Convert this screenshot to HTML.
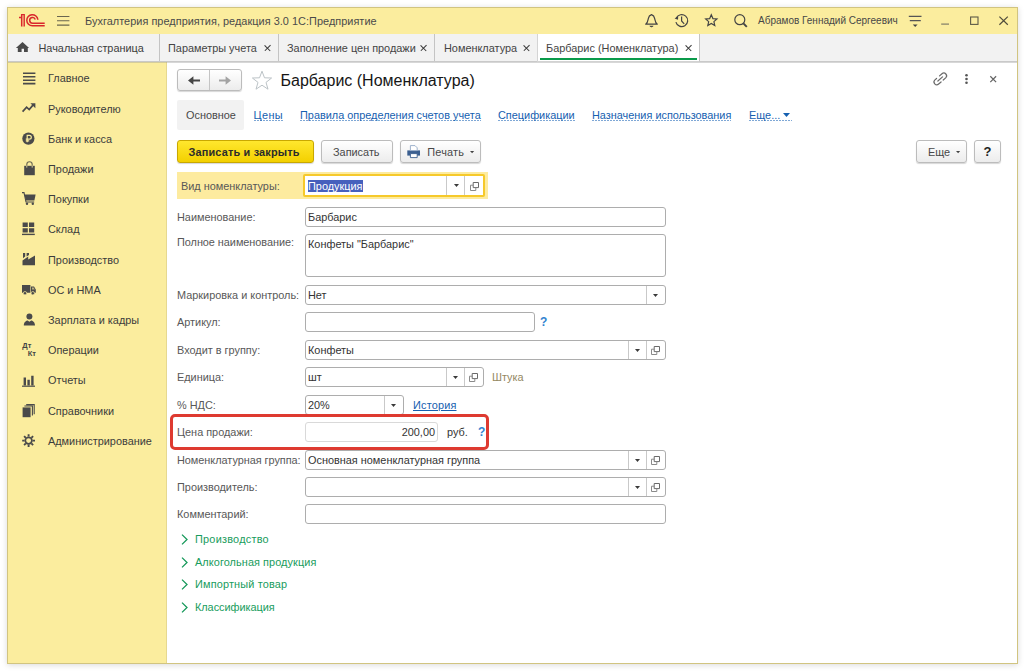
<!DOCTYPE html>
<html lang="ru"><head><meta charset="utf-8"><title>Барбарис (Номенклатура)</title>
<style>
*{box-sizing:border-box;margin:0;padding:0}
html,body{width:1024px;height:671px;overflow:hidden;background:#fff}
body{font-family:"Liberation Sans",sans-serif;font-size:10.9px;color:#444;position:relative}
body *{position:absolute}
.t{white-space:nowrap;line-height:14px;height:14px}
.win{left:7px;top:7px;width:1011px;height:657px;border:1px solid #d1c480;background:#fff;
 box-shadow:0 1px 6px 0 rgba(0,0,10,.15)}
.title{left:8px;top:8px;width:1009px;height:26px;background:#fbed9e}
.tabs{left:8px;top:34px;width:1009px;height:28px;background:#f2f2f2;border-bottom:1px solid #c9c9c9}
.tabs2{left:8px;top:62px;width:1009px;height:1px;background:rgba(150,150,150,.38)}
.side{left:8px;top:62px;width:159px;height:601px;background:#fbed9e;border-right:1px solid #e6d88f}
.vsep{top:34px;width:1px;height:27px;background:#c4c4c4}
.tabact{left:537px;top:34px;width:162px;height:28px;background:#fff;border-bottom:1px solid #d2d2d2;border-left:1px solid #d4d4d4}
.tabact:after{content:"";position:absolute;left:1.5px;top:24.4px;width:157px;height:1.8px;background:#0a9a4a}
svg{overflow:visible}
.x{width:6px;height:6px}
.x:before,.x:after{content:"";position:absolute;left:2.3px;top:-1.2px;width:1.35px;height:8.4px;background:#333;transform:rotate(45deg)}
.x:after{transform:rotate(-45deg)}
.lnk{color:#1560b0;height:13px;background:repeating-linear-gradient(90deg,#7fa8d6 0 2px,transparent 2px 3px) left bottom/100% 1px no-repeat}
.inp{border:1px solid #adadad;border-radius:3px;background:#fff;height:21px}
.btn{border:1px solid #bcbcbc;border-radius:3px;background:linear-gradient(#fff,#ececec);height:23px;box-shadow:0 1px 1px rgba(0,0,0,.16)}
.lbl{color:#585858}
.isep{width:1px;background:#c9c9c9}
.grp{color:#189c5c}
</style></head><body>
<div class="win"></div><div class="title"></div><div class="tabs"></div><div class="side"></div><div class="tabs2"></div>
<svg style="left:0;top:0" width="50" height="30" viewBox="0 0 50 30" fill="none" stroke="#d9262c" stroke-width="1.5">
 <rect x="22.2" y="15.2" width="1.4" height="11.4" fill="#f0a878" stroke="none"/>
 <path d="M19 17.5H21.6M21.6 26.6V14.65H24.25V26.6" stroke-width="1.3"/>
 <path d="M37.87 19.72 A5.55 5.55 0 1 0 32.35 25.85 H44.7"/><path d="M35.26 19.47 A2.85 2.85 0 1 0 32.55 23.20 H44.7"/>
</svg>
<svg style="left:56.5px;top:15px" width="13" height="11" viewBox="0 0 13 11" stroke="#6a664f" stroke-width="1.15"><path d="M0 1.5H12.4M0 5.7H12.4M0 10.1H12.4"/></svg>
<span class="t" style="left:85px;top:14px;letter-spacing:0.04px;color:#4a4a4a">Бухгалтерия предприятия, редакция 3.0 1С:Предприятие</span>
<svg style="left:645px;top:14px" width="13" height="14" viewBox="0 0 13 14" fill="none" stroke="#444" stroke-width="1.2" stroke-linejoin="round"><path d="M0.7 10.2 C2.7 8.6 2.9 6.8 3.3 4.6 C3.7 2.4 5 1.1 6.5 0.6 C8 1.1 9.3 2.4 9.7 4.6 C10.1 6.8 10.3 8.6 12.3 10.2 Z"/><path d="M4.8 12.1 H8.2 Q6.5 13.8 4.8 12.1Z" fill="#444" stroke-width=".6"/></svg>
<svg style="left:0;top:0" width="800" height="40" viewBox="0 0 800 40" fill="none" stroke="#444" stroke-width="1.2"><path d="M676.26 18.06 A6.0 6.0 0 1 1 675.90 22.15"/><path d="M681.6 16.6V21L684.2 23.8"/><path d="M674.6 18.4L678.2 16.2L678 19.8Z" fill="#444" stroke="none"/></svg>
<svg style="left:704.5px;top:14.2px" width="12.6" height="12.6" viewBox="0 0 14 14" fill="none" stroke="#444" stroke-width="1.3" stroke-linejoin="miter"><path d="M7 0.9 L8.8 5.1 L13.3 5.5 L9.9 8.5 L10.9 12.9 L7 10.6 L3.1 12.9 L4.1 8.5 L0.7 5.5 L5.2 5.1 Z"/></svg>
<svg style="left:733.5px;top:14px" width="14" height="14" viewBox="0 0 14 14" fill="none" stroke="#444" stroke-width="1.2"><circle cx="5.8" cy="5.7" r="5"/><path d="M9.4 9.3 L12.8 12.9" stroke-width="1.9"/></svg>
<span class="t" style="left:758px;top:14px;font-size:10px;color:#474747">Абрамов Геннадий Сергеевич</span>
<svg style="left:908px;top:15px" width="14" height="13" viewBox="0 0 14 13" stroke="#555" stroke-width="1.1"><path d="M0.8 1.4H13.5M1.8 5.6H12.8"/><path d="M4.8 9.6H9.6L7.2 12Z" fill="#444" stroke="none"/></svg>
<svg style="left:941px;top:15px" width="9" height="11" viewBox="0 0 9 11" stroke="#807c66" stroke-width="1.2"><path d="M0.2 9.1H8"/></svg>
<svg style="left:970px;top:16px" width="9" height="9" viewBox="0 0 9 9" fill="none" stroke="#5d5a48" stroke-width="1.1"><rect x="0.6" y="1" width="7.4" height="7.4"/></svg>
<svg style="left:999px;top:16px" width="9" height="9" viewBox="0 0 9 9" fill="none" stroke="#4f4c3c" stroke-width="1.2"><path d="M0.4 0.6L8.8 8.8M8.8 0.6L0.4 8.8"/></svg>
<svg style="left:16px;top:41.5px" width="13" height="10" viewBox="0 0 13 10" fill="#494949"><path d="M6.5 0 L13.1 6.1 H11.8 V10.1 H8 V6.7 H5.6 V10.1 H1.8 V6.1 H-0.1 Z"/></svg>
<span class="t" style="left:38.5px;top:41px;color:#3d3d3d">Начальная страница</span>
<div class="vsep" style="left:159px"></div>
<span class="t" style="left:168px;top:41px;">Параметры учета</span>
<span class="x" style="left:264.5px;top:45.3px"></span><div class="vsep" style="left:278px"></div>
<span class="t" style="left:287px;top:41px;">Заполнение цен продажи</span>
<span class="x" style="left:421px;top:45.3px"></span><div class="vsep" style="left:434px"></div>
<span class="t" style="left:444px;top:41px;">Номенклатура</span>
<span class="x" style="left:523.6px;top:45.3px"></span><div class="vsep" style="left:537px"></div><div class="tabact"></div>
<span class="t" style="left:546px;top:41px;">Барбарис (Номенклатура)</span>
<span class="x" style="left:685.3px;top:45.3px"></span><div class="vsep" style="left:699px"></div>
<svg style="left:22.6px;top:71.7px" width="14" height="14" viewBox="0 0 14 14"><path d="M0 1.2H12.4M0 4.7H12.4M0 8.2H12.4M0 11.6H12.4" stroke="#4a4a4a" stroke-width="1.6" fill="none"/></svg>
<span class="t" style="left:48px;top:71px;color:#3c3c3c">Главное</span>
<svg style="left:22px;top:101px" width="14" height="14" viewBox="0 0 14 14"><path d="M0.6 10.6 L4.6 6.2 L7.2 8.6 L11.6 3.4" stroke="#4a4a4a" stroke-width="1.7" fill="none"/><path d="M8.4 2.2 H13.4 V7.2 Z" fill="#4a4a4a"/></svg>
<span class="t" style="left:48px;top:102px;color:#3c3c3c">Руководителю</span>
<svg style="left:22.4px;top:132px" width="14" height="14" viewBox="0 0 14 14"><circle cx="6.4" cy="6.6" r="6.1" fill="#4a4a4a"/><path d="M5.2 10.2V3.4H7.4A1.9 1.9 0 0 1 7.4 7.2H3.8M3.8 8.8H7.2" stroke="#fbed9e" stroke-width="1.2" fill="none"/></svg>
<span class="t" style="left:48px;top:132px;color:#3c3c3c">Банк и касса</span>
<svg style="left:23px;top:161px" width="14" height="14" viewBox="0 0 14 14"><path d="M1.2 4.8H11.8V14.2H1.2Z" fill="#4a4a4a"/><path d="M3.8 4.8V3.4A2.7 2.7 0 0 1 9.2 3.4V4.8" stroke="#6a6752" stroke-width="1.1" fill="none"/><path d="M3.8 4.8V6.6M9.2 4.8V6.6" stroke="#d8cf9a" stroke-width="1"/></svg>
<span class="t" style="left:48px;top:162px;color:#3c3c3c">Продажи</span>
<svg style="left:22px;top:192px" width="14" height="14" viewBox="0 0 14 14"><path d="M2.4 2.6H13.6L12.4 8.4H3.8Z" fill="#4a4a4a"/><path d="M0 0.6H2L4 10H12.2" stroke="#4a4a4a" stroke-width="1.1" fill="none"/><circle cx="5" cy="11.8" r="1.2" fill="#4a4a4a"/><circle cx="10.8" cy="11.8" r="1.2" fill="#4a4a4a"/></svg>
<span class="t" style="left:48px;top:192px;color:#3c3c3c">Покупки</span>
<svg style="left:22px;top:222.4px" width="14" height="14" viewBox="0 0 14 14"><path d="M0.6 0.6H5.8V5H0.6ZM7 0.6H12.2V5H7ZM0.6 6.2H5.8V10.6H0.6ZM7 6.2H12.2V10.6H7Z" fill="#4a4a4a"/><path d="M0 12.4H12.8" stroke="#4a4a4a" stroke-width="1.4"/></svg>
<span class="t" style="left:48px;top:222px;color:#3c3c3c">Склад</span>
<svg style="left:22px;top:252.4px" width="14" height="14" viewBox="0 0 14 14"><path d="M0.5 13.2V8.6L6.2 4.6V7.4L13 3.6V13.2Z" fill="#4a4a4a"/><path d="M1 1H3.2V4.4L1 6.2ZM4.6 1H7V3L4.6 4.6Z" fill="#4a4a4a"/></svg>
<span class="t" style="left:48px;top:253px;color:#3c3c3c">Производство</span>
<svg style="left:22px;top:283px" width="14" height="14" viewBox="0 0 14 14"><path d="M0 2H8.4V9.8H0Z M9 3.6H12L13.8 6.6V9.8H9Z" fill="#4a4a4a"/><path d="M10 4.6H11.6L12.8 6.6H10Z" fill="#b9b07c"/><circle cx="3" cy="10.2" r="1.7" fill="#4a4a4a" stroke="#fbed9e" stroke-width=".7"/><circle cx="10.8" cy="10.2" r="1.7" fill="#4a4a4a" stroke="#fbed9e" stroke-width=".7"/></svg>
<span class="t" style="left:48px;top:283px;color:#3c3c3c">ОС и НМА</span>
<svg style="left:22.8px;top:313px" width="14" height="14" viewBox="0 0 14 14"><circle cx="6.4" cy="3.4" r="3" fill="#4a4a4a"/><path d="M0.8 12.6C0.8 8.6 3.4 7.6 4.6 7.4L6.4 8.8L8.2 7.4C9.4 7.6 12 8.6 12 12.6Z" fill="#4a4a4a"/></svg>
<span class="t" style="left:48px;top:313px;color:#3c3c3c">Зарплата и кадры</span>
<span class="t" style="left:22.3px;top:341.8px;font-size:7.5px;font-weight:bold;color:#444;line-height:8px;height:8px">Дт</span><span class="t" style="left:27.8px;top:350.3px;font-size:7.5px;font-weight:bold;color:#444;line-height:8px;height:8px">Кт</span>
<span class="t" style="left:48px;top:343px;color:#3c3c3c">Операции</span>
<svg style="left:22px;top:373.7px" width="14" height="14" viewBox="0 0 14 14"><path d="M1.6 3.4H4V11.6H1.6ZM5.4 5.8H7.8V11.6H5.4ZM9.2 1.8H11.6V11.6H9.2Z" fill="#4a4a4a"/><path d="M0 12.2H13" stroke="#4a4a4a" stroke-width="1.2"/></svg>
<span class="t" style="left:48px;top:373px;color:#3c3c3c">Отчеты</span>
<svg style="left:22px;top:404px" width="14" height="14" viewBox="0 0 14 14"><path d="M0.6 3.4H8.6V13.2H0.6Z" fill="#4a4a4a"/><path d="M2.4 2H10.4V11.6M4.2 0.6H12.2V10.2" stroke="#4a4a4a" stroke-width="1.1" fill="none"/></svg>
<span class="t" style="left:48px;top:404px;color:#3c3c3c">Справочники</span>
<svg style="left:22px;top:434px" width="14" height="14" viewBox="0 0 14 14"><circle cx="6.6" cy="6.6" r="3.3" fill="none" stroke="#4a4a4a" stroke-width="1.7"/><path d="M6.6 0.2V2.6M6.6 10.6V13M0.2 6.6H2.6M10.6 6.6H13M2.1 2.1L3.8 3.8M9.4 9.4L11.1 11.1M2.1 11.1L3.8 9.4M9.4 3.8L11.1 2.1" stroke="#4a4a4a" stroke-width="1.9"/></svg>
<span class="t" style="left:48px;top:434px;color:#3c3c3c">Администрирование</span>
<div class="btn" style="left:177px;top:69px;width:65px;height:22px"></div>
<div class="isep" style="left:209px;top:70px;height:20px;background:#c4c4c4"></div>
<svg style="left:188px;top:76px" width="12" height="9" viewBox="0 0 12 9"><path d="M0 4.5L5.4 0.2V3.4H12V5.6H5.4V8.8Z" fill="#454545"/></svg>
<svg style="left:219px;top:76px" width="12" height="9" viewBox="0 0 12 9"><path d="M12 4.5L6.6 0.2V3.5H0V5.5H6.6V8.8Z" fill="#a3a3a3"/></svg>
<svg style="left:251px;top:70px" width="22" height="21" viewBox="0 0 22 21" fill="none" stroke="#bcc3c7" stroke-width="1"><path d="M11 1.2 L13.5 7.8 L20.6 8 L15 12.4 L17 19.2 L11 15.2 L5 19.2 L7 12.4 L1.4 8 L8.5 7.8 Z"/></svg>
<span class="t" style="left:280.5px;top:70.5px;font-size:16px;line-height:20px;height:20px;color:#161616">Барбарис (Номенклатура)</span>
<svg style="left:934.2px;top:73.2px" width="12.6" height="12.6" viewBox="0 0 14 14" fill="none" stroke="#6a6a6a" stroke-width="1.35" stroke-linecap="round"><path d="M6.15 3.17 L8.85 0.78 A3.1 3.1 0 0 1 12.96 5.42 L10.26 7.81"/><path d="M2.84 6.09 L1.05 7.68 A3.1 3.1 0 0 0 5.16 12.32 L7.85 9.94"/><path d="M4.3 8.9L9.5 4.3"/></svg>
<svg style="left:965.2px;top:74.2px" width="3" height="10" viewBox="0 0 3 10" fill="#555"><circle cx="1.5" cy="1.2" r="1.3"/><circle cx="1.5" cy="5" r="1.3"/><circle cx="1.5" cy="8.8" r="1.3"/></svg>
<svg style="left:990.3px;top:76.3px" width="7" height="7" viewBox="0 0 7 7" stroke="#666" stroke-width="1.25"><path d="M0.3 0.3L6.1 6.1M6.1 0.3L0.3 6.1"/></svg>
<div style="left:177px;top:100px;width:67px;height:29.5px;background:#f2f2f2;border-radius:2px"></div>
<span class="t" style="left:186px;top:108px;color:#484848">Основное</span>
<span class="t lnk" style="left:253.5px;top:108px;letter-spacing:0.4px;">Цены</span>
<span class="t lnk" style="left:300px;top:108px;">Правила определения счетов учета</span>
<span class="t lnk" style="left:498px;top:108px;">Спецификации</span>
<span class="t lnk" style="left:592px;top:108px;">Назначения использования</span>
<span class="t lnk" style="left:749px;top:108px;width:43px">Еще...</span>
<svg style="left:783px;top:113px" width="7" height="4" viewBox="0 0 7 4"><path d="M0 0H7L3.5 4Z" fill="#1560b0"/></svg>
<div class="btn" style="left:177px;top:140px;width:137px;background:linear-gradient(#ffe72e,#f3d000);border-color:#c9a800"></div>
<span class="t" style="left:188.5px;top:145px;letter-spacing:0.18px;font-weight:bold;color:#2b2b2b">Записать и закрыть</span>
<div class="btn" style="left:321px;top:140px;width:72px"></div>
<span class="t" style="left:333px;top:144.7px;color:#484848">Записать</span>
<div class="btn" style="left:400px;top:140px;width:81px"></div>
<svg style="left:407.4px;top:145px" width="13" height="13" viewBox="0 0 13 13"><path d="M0.3 5.4H13V10.6H0.3Z" fill="#3b5f90"/><path d="M3.4 0.6H8L10.2 2.8V5.6H3.4Z" fill="#fff" stroke="#93a9c6" stroke-width=".9"/><path d="M3.4 8.6H10.2V12.6H3.4Z" fill="#fff" stroke="#3b5f90" stroke-width=".9"/></svg>
<span class="t" style="left:427.3px;top:144.7px;letter-spacing:0.2px;color:#484848">Печать</span>
<svg style="left:470px;top:151.3px" width="4" height="3" viewBox="0 0 4 3"><path d="M0 0H4.2L2.1 2.3Z" fill="#444"/></svg>
<div class="btn" style="left:916px;top:140px;width:51px"></div>
<span class="t" style="left:928px;top:144.7px;color:#484848">Еще</span>
<svg style="left:956.3px;top:151.3px" width="4" height="3" viewBox="0 0 4 3"><path d="M0 0H4.2L2.1 2.3Z" fill="#444"/></svg>
<div class="btn" style="left:974px;top:140px;width:27px"></div>
<span class="t" style="left:983.5px;top:144.5px;font-weight:bold;color:#222;font-size:13px">?</span>
<div style="left:177px;top:172px;width:311px;height:27px;background:#fdeb9f"></div>
<span class="t lbl" style="left:181px;top:179px;">Вид номенклатуры:</span>
<div class="inp" style="left:303px;top:174px;width:182px;height:23px;border:2px solid #f6c92a;border-radius:2px"></div>
<div style="left:307.5px;top:179.5px;width:55.5px;height:12px;background:#4660bd"></div>
<span class="t" style="left:308px;top:179px;color:#fff">Продукция</span>
<div class="isep" style="left:446px;top:176px;height:19px"></div><div class="isep" style="left:464px;top:176px;height:19px"></div>
<svg style="left:453.5px;top:184px" width="5" height="3" viewBox="0 0 5 3"><path d="M0 0H5L2.5 3Z" fill="#3a3a3a"/></svg>
<svg style="left:470px;top:182px" width="9" height="9" viewBox="0 0 9 9" fill="none" stroke="#6a6a6a" stroke-width="1"><path d="M3.2 0.5H8.5V5.6H3.2Z"/><path d="M3.2 3.2H0.5V8.5H5.8V5.6" stroke="#8a8a8a"/></svg>
<span class="t lbl" style="left:177px;top:210px;">Наименование:</span>
<div class="inp" style="left:305px;top:207px;width:361px;height:20px"></div>
<span class="t" style="left:308px;top:210px;color:#333">Барбарис</span>
<span class="t lbl" style="left:177px;top:235px;letter-spacing:-0.04px;">Полное наименование:</span>
<div class="inp" style="left:305px;top:234px;width:361px;height:43px"></div>
<span class="t" style="left:308px;top:237px;color:#333">Конфеты "Барбарис"</span>
<span class="t lbl" style="left:177px;top:288px;">Маркировка и контроль:</span>
<div class="inp" style="left:305px;top:285px;width:361px;height:20px"></div>
<span class="t" style="left:308px;top:288px;color:#333">Нет</span>
<div class="isep" style="left:646px;top:286px;height:18px"></div>
<svg style="left:653px;top:293.8px" width="5" height="3" viewBox="0 0 5 3"><path d="M0 0H5L2.5 3Z" fill="#3a3a3a"/></svg>
<span class="t lbl" style="left:177px;top:315px;">Артикул:</span>
<div class="inp" style="left:305px;top:312px;width:230px;height:20px"></div>
<span class="t" style="left:540px;top:315px;color:#3383d0;font-weight:bold;font-size:12px">?</span>
<span class="t lbl" style="left:177px;top:343px;">Входит в группу:</span>
<div class="inp" style="left:305px;top:340px;width:361px;height:20px"></div>
<span class="t" style="left:308px;top:343px;color:#333">Конфеты</span>
<div class="isep" style="left:646px;top:341px;height:18px"></div>
<svg style="left:651.2px;top:346px" width="9" height="9" viewBox="0 0 9 9" fill="none" stroke="#6a6a6a" stroke-width="1"><path d="M3.2 0.5H8.5V5.6H3.2Z"/><path d="M3.2 3.2H0.5V8.5H5.8V5.6" stroke="#8a8a8a"/></svg>
<div class="isep" style="left:628px;top:341px;height:18px"></div>
<svg style="left:635px;top:348.8px" width="5" height="3" viewBox="0 0 5 3"><path d="M0 0H5L2.5 3Z" fill="#3a3a3a"/></svg>
<span class="t lbl" style="left:177px;top:370px;">Единица:</span>
<div class="inp" style="left:305px;top:367px;width:178.5px;height:20px"></div>
<span class="t" style="left:308px;top:370px;color:#333">шт</span>
<div class="isep" style="left:463.5px;top:368px;height:18px"></div>
<svg style="left:468.7px;top:373px" width="9" height="9" viewBox="0 0 9 9" fill="none" stroke="#6a6a6a" stroke-width="1"><path d="M3.2 0.5H8.5V5.6H3.2Z"/><path d="M3.2 3.2H0.5V8.5H5.8V5.6" stroke="#8a8a8a"/></svg>
<div class="isep" style="left:445.5px;top:368px;height:18px"></div>
<svg style="left:452.5px;top:375.8px" width="5" height="3" viewBox="0 0 5 3"><path d="M0 0H5L2.5 3Z" fill="#3a3a3a"/></svg>
<span class="t" style="left:492px;top:370px;color:#94875f">Штука</span>
<span class="t lbl" style="left:177px;top:398px;">% НДС:</span>
<div class="inp" style="left:305px;top:395px;width:99px;height:20px"></div>
<span class="t" style="left:308px;top:398px;color:#333">20%</span>
<div class="isep" style="left:384px;top:396px;height:18px"></div>
<svg style="left:391px;top:403.8px" width="5" height="3" viewBox="0 0 5 3"><path d="M0 0H5L2.5 3Z" fill="#3a3a3a"/></svg>
<span class="t" style="left:413px;top:397.6px;letter-spacing:0.18px;color:#1560b0;text-decoration:underline">История</span>
<span class="t lbl" style="left:177px;top:425px;">Цена продажи:</span>
<div class="inp" style="left:305px;top:422px;width:133px;height:20px;border-color:#d9d9d9"></div>
<span class="t" style="left:335px;top:425px;width:100px;text-align:right;color:#333">200,00</span>
<span class="t" style="left:447px;top:425px;color:#333">руб.</span>
<span class="t" style="left:478px;top:425px;color:#3383d0;font-weight:bold;font-size:12px">?</span>
<span class="t lbl" style="left:177px;top:453px;letter-spacing:-0.03px;">Номенклатурная группа:</span>
<div class="inp" style="left:305px;top:450px;width:361px;height:20px"></div>
<span class="t" style="left:308px;top:453px;color:#333">Основная номенклатурная группа</span>
<div class="isep" style="left:646px;top:451px;height:18px"></div>
<svg style="left:651.2px;top:456px" width="9" height="9" viewBox="0 0 9 9" fill="none" stroke="#6a6a6a" stroke-width="1"><path d="M3.2 0.5H8.5V5.6H3.2Z"/><path d="M3.2 3.2H0.5V8.5H5.8V5.6" stroke="#8a8a8a"/></svg>
<div class="isep" style="left:628px;top:451px;height:18px"></div>
<svg style="left:635px;top:458.8px" width="5" height="3" viewBox="0 0 5 3"><path d="M0 0H5L2.5 3Z" fill="#3a3a3a"/></svg>
<span class="t lbl" style="left:177px;top:480px;">Производитель:</span>
<div class="inp" style="left:305px;top:477px;width:361px;height:20px"></div>
<div class="isep" style="left:646px;top:478px;height:18px"></div>
<svg style="left:651.2px;top:483px" width="9" height="9" viewBox="0 0 9 9" fill="none" stroke="#6a6a6a" stroke-width="1"><path d="M3.2 0.5H8.5V5.6H3.2Z"/><path d="M3.2 3.2H0.5V8.5H5.8V5.6" stroke="#8a8a8a"/></svg>
<div class="isep" style="left:628px;top:478px;height:18px"></div>
<svg style="left:635px;top:485.8px" width="5" height="3" viewBox="0 0 5 3"><path d="M0 0H5L2.5 3Z" fill="#3a3a3a"/></svg>
<span class="t lbl" style="left:177px;top:507px;">Комментарий:</span>
<div class="inp" style="left:305px;top:504px;width:361px;height:20px"></div>
<div style="left:170.4px;top:414.4px;width:318.8px;height:35.4px;border:3.4px solid #de3a30;border-radius:5px"></div>
<svg style="left:181px;top:534px" width="7" height="11" viewBox="0 0 7 11" fill="none" stroke="#16995a" stroke-width="1.3"><path d="M1 0.6L6 5.5L1 10.4"/></svg>
<span class="t grp" style="left:195px;top:532px;letter-spacing:0.24px;">Производство</span>
<svg style="left:181px;top:557px" width="7" height="11" viewBox="0 0 7 11" fill="none" stroke="#16995a" stroke-width="1.3"><path d="M1 0.6L6 5.5L1 10.4"/></svg>
<span class="t grp" style="left:195px;top:555px;letter-spacing:0.08px;">Алкогольная продукция</span>
<svg style="left:181px;top:579px" width="7" height="11" viewBox="0 0 7 11" fill="none" stroke="#16995a" stroke-width="1.3"><path d="M1 0.6L6 5.5L1 10.4"/></svg>
<span class="t grp" style="left:195px;top:577px;letter-spacing:0.17px;">Импортный товар</span>
<svg style="left:181px;top:601.5px" width="7" height="11" viewBox="0 0 7 11" fill="none" stroke="#16995a" stroke-width="1.3"><path d="M1 0.6L6 5.5L1 10.4"/></svg>
<span class="t grp" style="left:195px;top:599.5px;letter-spacing:-0.04px;">Классификация</span>
</body></html>
